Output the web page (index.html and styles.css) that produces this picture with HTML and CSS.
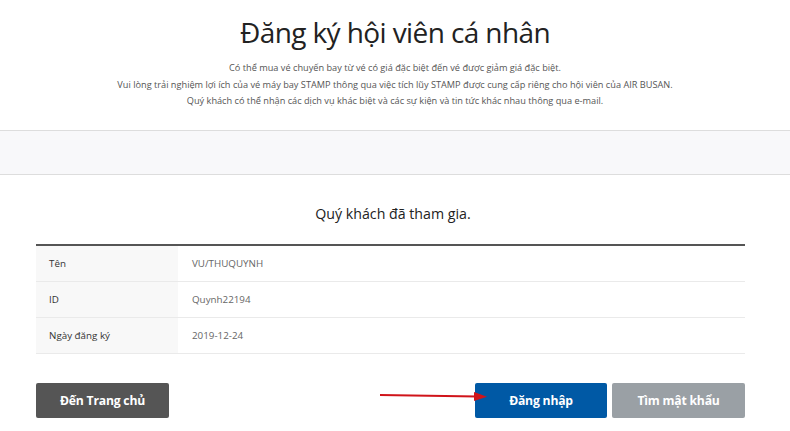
FILE: index.html
```html
<!DOCTYPE html>
<html lang="vi">
<head>
    <meta charset="UTF-8" />
    <meta name="viewport" content="width=device-width, initial-scale=1" />
    <title>Đăng ký hội viên cá nhân | AIR BUSAN</title>
    <link rel="stylesheet" href="styles.css">
</head>
<body>

    <div class="page-head">
        <h2>Đăng ký hội viên cá nhân</h2>
        <p>Có thể mua vé chuyến bay từ vé có giá đặc biệt đến vé được giảm giá đặc biệt.<br>
        Vui lòng trải nghiệm lợi ích của vé máy bay STAMP thông qua việc tích lũy STAMP được cung cấp riêng cho hội viên của AIR BUSAN.<br>
        Quý khách có thể nhận các dịch vụ khác biệt và các sự kiện và tin tức khác nhau thông qua e-mail.</p>
    </div>

    <div class="step-bar"></div>

    <div class="content">
        <h3>Quý khách đã tham gia.</h3>

        <table class="info">
            <tr><th>Tên</th><td>VU/THUQUYNH</td></tr>
            <tr><th>ID</th><td>Quynh22194</td></tr>
            <tr><th>Ngày đăng ký</th><td>2019-12-24</td></tr>
        </table>

        <div class="buttons">
            <button class="btn btn-dark">Đến Trang chủ</button>
            <div class="right">
                <button class="btn btn-blue">Đăng nhập</button>
                <button class="btn btn-gray">Tìm mật khẩu</button>
                <svg class="arrow" width="110" height="14" viewBox="0 0 110 14">
                    <line x1="1" y1="6" x2="98" y2="7.5" stroke="#d0141a" stroke-width="2" />
                    <polygon points="95,3 108,7.7 95,12" fill="#d0141a" />
                </svg>
            </div>
        </div>
    </div>

</body>
</html>
```

FILE: styles.css
```css
body { margin: 0; font-family: "Open Sans", "Noto Sans", sans-serif; color: #333; background: #fff; }
.page-head { text-align: center; padding-top: 12px; height: 119px; box-sizing: border-box; }
.page-head h2 { margin: 0; font-size: 28px; font-weight: 400; line-height: 40px; color: #222; letter-spacing: -0.6px; }
.page-head p { margin: 8px 0 0; font-size: 9.2px; line-height: 16.5px; color: #555; }
.step-bar { margin-top: 11px; height: 43px; background: #f8f8fa; border-top: 1px solid #ddd; border-bottom: 1px solid #ddd; }
.content { padding: 0 45px 0 36px; }
.content h3 { margin: 28px 0 0; text-align: center; font-size: 14.2px; font-weight: 400; line-height: 22px; color: #222; padding-left: 5px; }
.info { width: 100%; margin-top: 19px; border-collapse: collapse; border-top: 2px solid #555; font-size: 9.8px; }
.info th, .info td { height: 35px; border-bottom: 1px solid #eaeaea; text-align: left; padding: 0; }
.info th { width: 142px; background: #f8f8f8; font-weight: 400; color: #333; padding-left: 13px; box-sizing: border-box; }
.info td { padding-left: 14px; color: #666; }
.buttons { display: flex; justify-content: space-between; margin-top: 29px; }
.right { display: flex; gap: 5px; position: relative; }
.btn { width: 133px; height: 35px; border: none; border-radius: 2px; color: #fff; font-family: inherit; font-size: 12.2px; font-weight: 700; letter-spacing: -0.2px; cursor: pointer; }
.btn-dark { background: #555; }
.btn-blue { background: #0059a5; width: 132px; }
.btn-gray { background: #9aa0a5; }
.arrow { position: absolute; left: -96px; top: 6px; }
```
